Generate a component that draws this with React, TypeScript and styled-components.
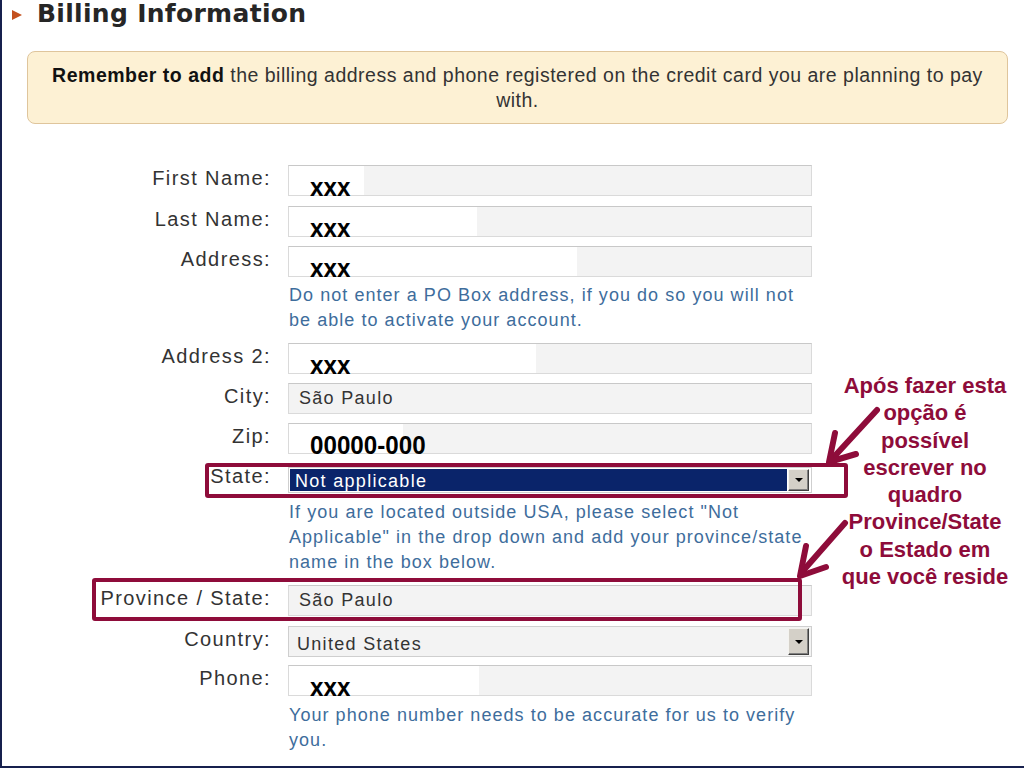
import styled, { createGlobalStyle } from 'styled-components'

const MAROON = '#8e0c3a'
const NAVY = '#17204d'

const GlobalStyle = createGlobalStyle`
  html, body {
    margin: 0;
    padding: 0;
    background: #fff;
  }
  body {
    font-family: 'Liberation Sans', Arial, sans-serif;
  }
`

function Field({
  label,
  top,
  labelHeight,
  children,
}: {
  label: string
  top: number
  labelHeight?: number
  children: React.ReactNode
}) {
  return (
    <Row $top={top}>
      <Label $lh={labelHeight}>{label}</Label>
      {children}
    </Row>
  )
}

function Blanked({ width, text }: { width: number; text: string }) {
  return (
    <TextBox>
      <Mask $w={width}>
        <Redacted>{text}</Redacted>
      </Mask>
    </TextBox>
  )
}

function App() {
  return (
    <>
      <GlobalStyle />
      <Page>
        <Header>
          <Triangle />
          <Title>Billing Information</Title>
        </Header>

        <Notice>
          <b>Remember to add</b> the billing address and phone registered on the credit card you are planning to pay
          <br />
          with.
        </Notice>

        <Form>
          <Field label="First Name:" top={0}>
            <Blanked width={75} text="xxx" />
          </Field>
          <Field label="Last Name:" top={10}>
            <Blanked width={188} text="xxx" />
          </Field>
          <Field label="Address:" top={9}>
            <Blanked width={288} text="xxx" />
          </Field>
          <Help $top={6}>
            Do not enter a PO Box address, if you do so you will not
            <br />
            be able to activate your account.
          </Help>
          <Field label="Address 2:" top={10}>
            <Blanked width={247} text="xxx" />
          </Field>
          <Field label="City:" top={9}>
            <TextBox>
              <Value>São Paulo</Value>
            </TextBox>
          </Field>
          <Field label="Zip:" top={9}>
            <Blanked width={114} text="00000-000" />
          </Field>
          <Field label="State:" top={13} labelHeight={18}>
            <SelectBox $h={26} $bg="#fff">
              <SelectValue $active>Not applicable</SelectValue>
              <DropButton>
                <Caret />
              </DropButton>
            </SelectBox>
          </Field>
          <Help $top={7}>
            If you are located outside USA, please select "Not
            <br />
            Applicable" in the drop down and add your province/state
            <br />
            name in the box below.
          </Help>
          <Field label="Province / State:" top={10}>
            <TextBox>
              <Value>São Paulo</Value>
            </TextBox>
          </Field>
          <Field label="Country:" top={10}>
            <SelectBox $h={31} $bg="#f3f3f3">
              <SelectValue $lower>United States</SelectValue>
              <DropButton>
                <Caret />
              </DropButton>
            </SelectBox>
          </Field>
          <Field label="Phone:" top={8}>
            <Blanked width={190} text="xxx" />
          </Field>
          <Help $top={7}>
            Your phone number needs to be accurate for us to verify
            <br />
            you.
          </Help>
        </Form>

        <Highlight $x={205} $y={463} $w={643} $h={35} />
        <Highlight $x={92} $y={578} $w={710} $h={43} />

        <Arrows viewBox="0 0 1024 768">
          <g fill="none" stroke={MAROON} strokeWidth={6} strokeLinecap="round" strokeLinejoin="round">
            <path d="M877 410 L832 459" />
            <path d="M835 433 L829 462 L856 454" />
            <path d="M845 523 L802 572" />
            <path d="M806 546 L800 576 L826 567" />
          </g>
        </Arrows>

        <Callout>
          Após fazer esta
          <br />
          opção é
          <br />
          possível
          <br />
          escrever no
          <br />
          quadro
          <br />
          Province/State
          <br />
          o Estado em
          <br />
          que você reside
        </Callout>
      </Page>
    </>
  )
}

const Page = styled.div`
  position: relative;
  box-sizing: border-box;
  width: 1024px;
  height: 768px;
  overflow: hidden;
  background: #fff;
  box-shadow: inset 2px 0 0 ${NAVY}, inset 0 -2px 0 ${NAVY};
`

const Header = styled.header`
  display: flex;
  align-items: flex-start;
  height: 22px;
  padding-left: 12px;
`

const Triangle = styled.span`
  width: 0;
  height: 0;
  margin: 10px 15px 0 0;
  border-top: 5px solid transparent;
  border-bottom: 5px solid transparent;
  border-left: 10px solid #c4501e;
`

const Title = styled.h1`
  margin: 0;
  font-family: 'DejaVu Sans', Verdana, sans-serif;
  font-size: 25px;
  font-weight: bold;
  line-height: 27px;
  letter-spacing: 0.3px;
  color: #262626;
  white-space: nowrap;
`

const Notice = styled.div`
  margin: 29px 16px 0 27px;
  padding: 11px 0 10px;
  border: 1px solid #dfc59c;
  border-radius: 8px;
  background: #fdf1d4;
  text-align: center;
  font-size: 19.5px;
  letter-spacing: 0.5px;
  line-height: 25px;
  color: #333;
  white-space: nowrap;

  b {
    color: #111;
  }
`

const Form = styled.div`
  margin-top: 41px;
`

const Row = styled.div<{ $top: number }>`
  display: flex;
  align-items: flex-start;
  margin-top: ${(p) => p.$top}px;
`

const Label = styled.label<{ $lh?: number }>`
  flex: none;
  width: 271px;
  margin-right: 17px;
  text-align: right;
  font-size: 20px;
  letter-spacing: 1.4px;
  line-height: ${(p) => p.$lh ?? 26}px;
  color: #333;
  white-space: nowrap;
`

const TextBox = styled.div`
  display: flex;
  align-items: center;
  box-sizing: border-box;
  width: 524px;
  height: 31px;
  border: 1px solid #dadada;
  border-top-color: #c8c8c8;
  background: #f3f3f3;
`

const Value = styled.span`
  padding-left: 10px;
  font-size: 18px;
  letter-spacing: 1.3px;
  color: #333;
`

const Mask = styled.div<{ $w: number }>`
  display: flex;
  align-items: flex-end;
  align-self: stretch;
  box-sizing: border-box;
  width: ${(p) => p.$w}px;
  padding-left: 21px;
  background: #fff;
`

const Redacted = styled.span`
  margin-bottom: -3px;
  font-family: 'Liberation Sans', Arial, sans-serif;
  font-size: 26px;
  font-weight: bold;
  line-height: 22px;
  color: #000;
  white-space: nowrap;
  transform: scaleX(0.93);
  transform-origin: left bottom;
`

const SelectBox = styled.div<{ $h: number; $bg: string }>`
  display: flex;
  gap: 1px;
  box-sizing: border-box;
  width: 524px;
  height: ${(p) => p.$h}px;
  padding: 1px;
  border: 1px solid #cfcfcf;
  background: ${(p) => p.$bg};
`

const SelectValue = styled.div<{ $active?: boolean; $lower?: boolean }>`
  flex: 1;
  display: flex;
  align-items: center;
  padding-left: ${(p) => (p.$active ? 5 : 7)}px;
  padding-top: ${(p) => (p.$lower ? 5 : 3)}px;
  background: ${(p) => (p.$active ? '#0a246a' : 'transparent')};
  color: ${(p) => (p.$active ? '#fff' : '#333')};
  font-size: 18px;
  letter-spacing: 1.3px;
  white-space: nowrap;
`

const DropButton = styled.div`
  display: flex;
  align-items: center;
  justify-content: center;
  box-sizing: border-box;
  width: 21px;
  margin-right: 1px;
  border: 1px solid;
  border-color: #f4f3ef #404040 #404040 #f4f3ef;
  background: #d4d0c8;
  box-shadow: inset -1px -1px 0 #808080;
`

const Caret = styled.span`
  width: 0;
  height: 0;
  border-left: 4px solid transparent;
  border-right: 4px solid transparent;
  border-top: 4px solid #000;
`

const Help = styled.p<{ $top: number }>`
  margin: ${(p) => p.$top}px 0 0 289px;
  font-size: 18px;
  letter-spacing: 1.05px;
  line-height: 25px;
  color: #3e6d9c;
  white-space: nowrap;
`

const Highlight = styled.div<{ $x: number; $y: number; $w: number; $h: number }>`
  position: absolute;
  left: ${(p) => p.$x}px;
  top: ${(p) => p.$y}px;
  box-sizing: border-box;
  width: ${(p) => p.$w}px;
  height: ${(p) => p.$h}px;
  border: 4px solid ${MAROON};
  border-radius: 3px;
`

const Arrows = styled.svg`
  position: absolute;
  left: 0;
  top: 0;
  width: 1024px;
  height: 768px;
  pointer-events: none;
`

const Callout = styled.div`
  position: absolute;
  left: 825px;
  top: 372px;
  width: 200px;
  text-align: center;
  font-size: 22px;
  font-weight: bold;
  line-height: 27.3px;
  color: ${MAROON};
  white-space: nowrap;
`

export default App
